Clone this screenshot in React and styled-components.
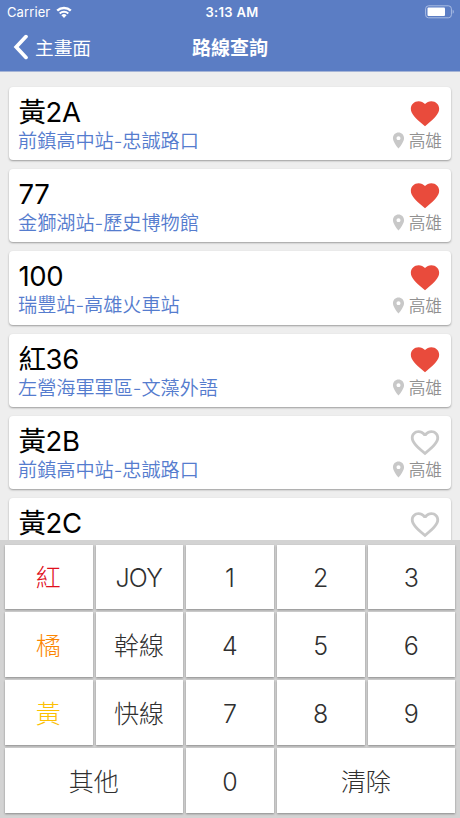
import React from "react";
import styled, { createGlobalStyle } from "styled-components";

const routes = [
  { name: "黃2A", path: "前鎮高中站-忠誠路口", city: "高雄", favorite: true },
  { name: "77", path: "金獅湖站-歷史博物館", city: "高雄", favorite: true },
  { name: "100", path: "瑞豐站-高雄火車站", city: "高雄", favorite: true },
  { name: "紅36", path: "左營海軍軍區-文藻外語", city: "高雄", favorite: true },
  { name: "黃2B", path: "前鎮高中站-忠誠路口", city: "高雄", favorite: false },
  { name: "黃2C", favorite: false },
];

const keys = [
  { label: "紅", color: "#e0101c" },
  { label: "JOY", latin: true },
  { label: "1", latin: true },
  { label: "2", latin: true },
  { label: "3", latin: true },
  { label: "橘", color: "#fb8500" },
  { label: "幹線" },
  { label: "4", latin: true },
  { label: "5", latin: true },
  { label: "6", latin: true },
  { label: "黃", color: "#fcc003" },
  { label: "快線" },
  { label: "7", latin: true },
  { label: "8", latin: true },
  { label: "9", latin: true },
  { label: "其他", span: 2 },
  { label: "0", latin: true },
  { label: "清除", span: 2 },
];

function WifiIcon() {
  return (
    <svg width="16" height="13" viewBox="0 0 16 13" fill="none">
      <path d="M1.2 4.7a9.8 9.8 0 0 1 13.6 0" stroke="#fff" strokeWidth="2.4" />
      <path d="M3.7 7.5a6.2 6.2 0 0 1 8.6 0" stroke="#fff" strokeWidth="2" />
      <path d="M8 11.9 5.4 9.3a3.7 3.7 0 0 1 5.2 0z" fill="#fff" />
    </svg>
  );
}

function BatteryIcon() {
  return (
    <svg width="30" height="14" viewBox="0 0 30 14">
      <rect
        x="0.6"
        y="0.8"
        width="25.8"
        height="12"
        rx="3"
        fill="none"
        stroke="#a9bce3"
        strokeWidth="1"
      />
      <rect x="2.5" y="2.6" width="17.5" height="8.4" rx="1" fill="#fff" />
      <path d="M27.7 4.8c1.5.6 1.5 3.4 0 4z" fill="#a9bce3" />
    </svg>
  );
}

function HeartIcon({ filled }) {
  return (
    <svg width="34" height="33" viewBox="0 0 24 24" preserveAspectRatio="none">
      {filled ? (
        <path
          fill="#e94b3c"
          d="M12 21.35l-1.45-1.32C5.4 15.36 2 12.28 2 8.5 2 5.42 4.42 3 7.5 3c1.74 0 3.41.81 4.5 2.09C13.09 3.81 14.76 3 16.5 3 19.58 3 22 5.42 22 8.5c0 3.78-3.4 6.86-8.55 11.54L12 21.35z"
        />
      ) : (
        <path
          fill="#c8c8c8"
          d="M16.5 3c-1.74 0-3.41.81-4.5 2.09C10.91 3.81 9.24 3 7.5 3 4.42 3 2 5.42 2 8.5c0 3.78 3.4 6.86 8.55 11.54L12 21.35l1.45-1.32C18.6 15.36 22 12.28 22 8.5 22 5.42 19.58 3 16.5 3zm-4.4 15.55l-.1.1-.1-.1C7.14 14.24 4 11.39 4 8.5 4 6.5 5.5 5 7.5 5c1.54 0 3.04.99 3.57 2.36h1.87C13.46 5.99 14.96 5 16.5 5c2 0 3.5 1.5 3.5 3.5 0 2.89-3.14 5.74-7.9 10.05z"
        />
      )}
    </svg>
  );
}

function PinIcon() {
  return (
    <svg width="19" height="19" viewBox="0 0 24 24">
      <path
        fill="#c8c8c8"
        d="M12 2C8.13 2 5 5.13 5 9c0 5.25 7 13 7 13s7-7.75 7-13c0-3.87-3.13-7-7-7zm0 9.5c-1.38 0-2.5-1.12-2.5-2.5s1.12-2.5 2.5-2.5 2.5 1.12 2.5 2.5-1.12 2.5-2.5 2.5z"
      />
    </svg>
  );
}

function RouteCard({ name, path, city, favorite }) {
  return (
    <Card>
      <CardInfo>
        <RouteName>{name}</RouteName>
        {path && <RoutePath>{path}</RoutePath>}
      </CardInfo>
      <CardSide>
        <HeartIcon filled={favorite} />
        {city && (
          <City>
            <PinIcon />
            <CityName>{city}</CityName>
          </City>
        )}
      </CardSide>
    </Card>
  );
}

function App() {
  return (
    <Screen>
      <GlobalStyle />
      <Header>
        <StatusBar>
          <Carrier>
            <span>Carrier</span>
            <WifiIcon />
          </Carrier>
          <Clock>3:13 AM</Clock>
          <Battery>
            <BatteryIcon />
          </Battery>
        </StatusBar>
        <NavBar>
          <BackButton>
            <svg width="16" height="26" viewBox="0 0 16 26" fill="none">
              <path
                d="M13 2.6 3.2 13l9.8 10.4"
                stroke="#fff"
                strokeWidth="3.7"
                strokeLinecap="round"
              />
            </svg>
            <NavText>主畫面</NavText>
          </BackButton>
          <NavTitle>路線查詢</NavTitle>
        </NavBar>
      </Header>
      <RouteList>
        {routes.map((route) => (
          <RouteCard key={route.name} {...route} />
        ))}
      </RouteList>
      <Keypad>
        {keys.map(({ label, color, span, latin }) => (
          <Key key={label} $color={color} $span={span} $latin={latin}>
            {label}
          </Key>
        ))}
      </Keypad>
    </Screen>
  );
}

const GlobalStyle = createGlobalStyle`
  * {
    box-sizing: border-box;
  }
  body {
    margin: 0;
    font-family: Inter, "Noto Sans CJK TC", sans-serif;
  }
  svg {
    display: block;
    flex-shrink: 0;
  }
`;

const Screen = styled.div`
  display: flex;
  flex-direction: column;
  width: 460px;
  height: 818px;
  overflow: hidden;
  background: #eeeeee;
`;

const Header = styled.header`
  flex: 0 0 72px;
  background: #5b7dc4;
  border-bottom: 1px solid #a5b4d6;
  color: #fff;
`;

const StatusBar = styled.div`
  display: grid;
  grid-template-columns: 1fr auto 1fr;
  align-items: center;
  height: 24px;
  padding: 0 5px 0 7px;
`;

const Carrier = styled.div`
  display: flex;
  align-items: center;
  gap: 6px;
  font-size: 13px;
  letter-spacing: 0.1px;
`;

const Clock = styled.div`
  padding-left: 2px;
  font-size: 13px;
  font-weight: 600;
  letter-spacing: 0.3px;
`;

const Battery = styled.div`
  display: flex;
  justify-content: flex-end;
`;

const NavBar = styled.nav`
  display: grid;
  grid-template-columns: 1fr auto 1fr;
  align-items: center;
  height: 46px;
`;

const BackButton = styled.div`
  display: flex;
  align-items: center;
  gap: 6px;
  padding-left: 13px;
`;

const NavText = styled.span`
  padding-bottom: 2px;
  font-size: 18.7px;
`;

const NavTitle = styled.div`
  padding-bottom: 2px;
  font-size: 19px;
  font-weight: 600;
`;

const RouteList = styled.main`
  flex: 1;
  min-height: 0;
  display: flex;
  flex-direction: column;
  gap: 9px;
  padding: 15px 9px 0;
  overflow: hidden;
`;

const Card = styled.article`
  flex: 0 0 73.2px;
  display: flex;
  justify-content: space-between;
  padding: 9px 9px 0;
  border-radius: 4px;
  background: #fff;
  box-shadow: 0 1px 2px rgba(0, 0, 0, 0.35);
`;

const CardInfo = styled.div`
  display: flex;
  flex-direction: column;
`;

const RouteName = styled.h2`
  margin: 0;
  height: 32px;
  padding-left: 0.5px;
  font-size: 27.5px;
  font-weight: 400;
  line-height: 32px;
  letter-spacing: -0.4px;
  color: #000;
`;

const RoutePath = styled.p`
  margin: 0;
  font-size: 19.2px;
  font-weight: 350;
  line-height: 26px;
  letter-spacing: -0.05px;
  color: #557cce;
`;

const CardSide = styled.div`
  display: flex;
  flex-direction: column;
  align-items: flex-end;
  padding-top: 0.8px;
`;

const City = styled.div`
  display: flex;
  align-items: center;
  gap: 1px;
  height: 22px;
  color: #909090;
`;

const CityName = styled.span`
  padding-bottom: 1px;
  font-size: 16.7px;
  font-weight: 350;
`;

const Keypad = styled.section`
  flex: 0 0 278px;
  display: grid;
  grid-template-columns: repeat(5, minmax(0, 1fr));
  grid-template-rows: repeat(4, minmax(0, 1fr));
  gap: 3px;
  padding: 4.5px 4.5px 5px 5px;
  background: #d3d3d3;
`;

const Key = styled.div`
  grid-column: span ${(props) => props.$span || 1};
  display: flex;
  align-items: center;
  justify-content: center;
  padding: ${(props) => (props.$latin ? "2px 1.5px 0 0" : "0 1px 2px 0")};
  background: #fff;
  box-shadow: 0 1px 2px rgba(0, 0, 0, 0.35);
  color: ${(props) => props.$color || "#303030"};
  font-size: 25px;
  font-weight: 300;
  letter-spacing: ${(props) => (props.$latin ? "-0.8px" : "0")};
`;

export default App;
